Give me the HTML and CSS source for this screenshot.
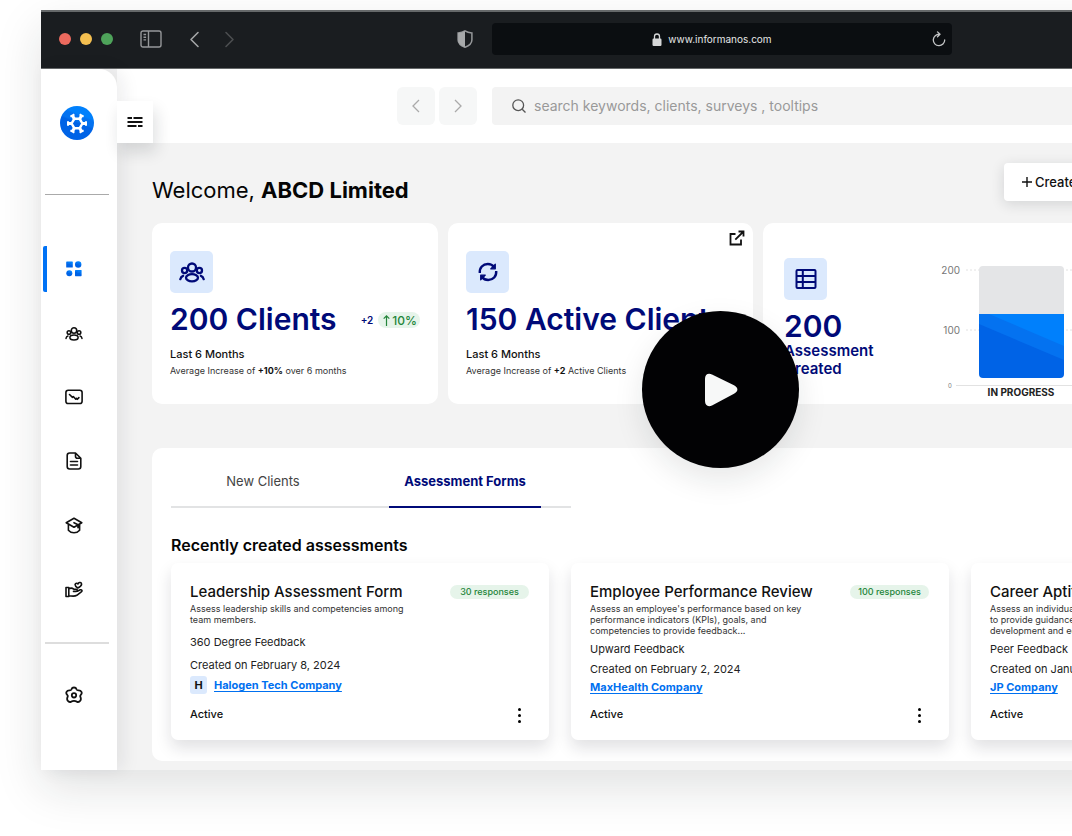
FILE: index.html
```html
<!DOCTYPE html>
<html lang="en">
<head>
<meta charset="utf-8">
<title>Informanos dashboard</title>
<link rel="stylesheet" href="styles.css">
</head>
<body>
<svg class="defs" aria-hidden="true">
  <defs>
    <linearGradient id="blue" x1="0.3" y1="1" x2="0.7" y2="0"><stop offset="0.5" stop-color="#0063e6"/><stop offset="0.55" stop-color="#0472f0"/><stop offset="0.7" stop-color="#0472f0"/><stop offset="0.75" stop-color="#0080fc"/></linearGradient>
    <symbol id="people" viewBox="0 0 26 22">
      <g fill="none" stroke="currentColor" stroke-width="2.3" stroke-linecap="round">
        <circle cx="13" cy="6.500" r="4"/><circle cx="5.600" cy="9.500" r="2.600"/><circle cx="20.400" cy="9.500" r="2.600"/>
        <ellipse cx="13" cy="16.800" rx="6" ry="3.600"/><path d="M1.300 18.200c.4-1.800 1.300-2.900 2.800-3.400M24.700 18.200c-.4-1.800-1.300-2.900-2.800-3.400"/>
      </g>
    </symbol>
  </defs>
</svg>
<div class="window">
  <header class="titlebar">
    <div class="lights"><i class="light red"></i><i class="light yellow"></i><i class="light green"></i></div>
    <div class="browser-tools">
      <svg width="22" height="18" viewBox="0 0 22 18" fill="none" stroke="#96989a" stroke-width="1.4"><rect x="1" y="1" width="20" height="16" rx="2"/><path d="M8.500 1v16M3.500 4.500h2.600M3.500 7.200h2.600M3.500 9.900h2.600"/></svg>
      <svg class="back" width="11" height="17" viewBox="0 0 11 17" fill="none" stroke="#a3a5a6" stroke-width="1.600" stroke-linecap="round" stroke-linejoin="round"><path d="M9 1.500 2 8.500l7 7"/></svg>
      <svg class="forward" width="11" height="17" viewBox="0 0 11 17" fill="none" stroke="#4b4e50" stroke-width="1.600" stroke-linecap="round" stroke-linejoin="round"><path d="m2 1.500 7 7-7 7"/></svg>
    </div>
    <svg class="shield" width="16" height="18" viewBox="0 0 16 18"><path d="M8 .9c2 1.400 4.300 1.900 6.900 2v7c0 3.700-3.400 5.900-6.900 7.300-3.500-1.400-6.900-3.600-6.900-7.300v-7C3.700 2.800 6 2.300 8 .9Z" fill="none" stroke="#96989a" stroke-width="1.500"/><path d="M8 1v16c-3.500-1.400-6.900-3.400-6.900-7.100v-7C3.700 2.800 6 2.400 8 1Z" fill="#a7a9aa"/></svg>
    <div class="address">
      <span class="url"><svg width="10" height="13" viewBox="0 0 10 13"><path d="M2.500 6V3.500a2.500 2.500 0 0 1 5 0V6" fill="none" stroke="#d6d7d8" stroke-width="1.300"/><rect x=".5" y="5.500" width="9" height="7.500" rx="1.200" fill="#d6d7d8"/></svg>www.informanos.com</span>
      <svg width="14" height="16" viewBox="0 0 14 16" fill="none" stroke="#c3c5c6" stroke-width="1.300" stroke-linecap="round" stroke-linejoin="round"><path d="M7.500 3.300A5.700 5.700 0 1 0 12.700 9M5.500.9l2.500 2.400-2.500 2.500"/></svg>
    </div>
  </header>

  <div class="app">
    <aside class="sidebar">
      <div class="brand">
        <svg width="34" height="34" viewBox="0 0 34 34"><circle cx="17" cy="17" r="17" fill="url(#blue)"/><g transform="translate(17 17.500)" fill="none" stroke="#fff"><path d="M5.400 0 2.700 4.700H-2.700L-5.400 0-2.700-4.700H2.700Z" stroke-width="2.400"/><path stroke-width="3" d="M5.500 0H9.500M-5.500 0H-9.500M2.800 4.800 4.700 8.200M-2.800 4.800-4.700 8.200M2.800-4.800 4.700-8.200M-2.800-4.800-4.700-8.200"/><path d="M9-2.300v4.600M-9-2.300v4.600M2.600-9.100l4 2.300M-2.600-9.100l-4 2.300M2.600 9.100l4-2.300M-2.600 9.100l-4-2.300" stroke-width="2"/></g></svg>
      </div>
      <nav class="menu" aria-label="Main">
        <a class="menu-item current" href="#" aria-label="Dashboard"><svg width="18" height="18" viewBox="0 0 18 18" fill="url(#blue)"><rect x="1.200" y="1.500" width="6.600" height="6" rx=".6"/><circle cx="13.200" cy="4.500" r="3.200"/><circle cx="4.300" cy="13.200" r="3"/><rect x="10" y="10" width="6.600" height="6.200" rx=".6"/></svg></a>
        <a class="menu-item" href="#" aria-label="Clients"><svg width="18" height="15"><use href="#people"/></svg></a>
        <a class="menu-item" href="#" aria-label="Reports"><svg width="18" height="16" viewBox="0 0 18 16" fill="none" stroke="currentColor" stroke-width="1.600" stroke-linecap="round" stroke-linejoin="round"><rect x=".9" y="1.300" width="16.200" height="13.200" rx="2.300"/><path d="m4.500 5.500 3 2.800.8-.8 2.500 2.700.7-.8.9.9 1.500-1.700"/></svg></a>
        <a class="menu-item" href="#" aria-label="Forms"><svg width="16" height="18" viewBox="0 0 16 18" fill="none" stroke="currentColor" stroke-width="1.600" stroke-linecap="round" stroke-linejoin="round"><path d="M9.500 1H3.700C2.200 1 1.200 2 1.200 3.500v11c0 1.500 1 2.500 2.500 2.500h8.600c1.500 0 2.500-1 2.500-2.500V6.300L9.500 1v3.300c0 1.300.7 2 2 2h3.300M4.500 9.500h7M4.500 13h7"/></svg></a>
        <a class="menu-item" href="#" aria-label="Training"><svg width="18" height="17" viewBox="0 0 18 17" fill="none" stroke="currentColor" stroke-width="1.600" stroke-linecap="round" stroke-linejoin="round"><path d="M9 1.300 1.200 5.700 9 10.200l7.800-4.500L9 1.300ZM3.400 7.200v6c1.200 1.500 3.100 2.500 5.600 2.500s4.400-1 5.600-2.500v-6M9 5.700l4 2v3"/></svg></a>
        <a class="menu-item" href="#" aria-label="Giving"><svg width="18" height="17" viewBox="0 0 18 17" fill="none" stroke="currentColor" stroke-width="1.600" stroke-linecap="round" stroke-linejoin="round"><path d="M1 6.500h2.800v9H1zM3.800 7.800c2-1.200 3.600-.8 5 .4h2.400c1.500 0 1.500 2.200 0 2.200H8.500M12.300 10.200l3-1.400c1.700-.4 2.200 1.200 1 2l-4.500 3.500c-2.500 1.500-5 .6-8 .4M12.800 7c-2-1.200-3-2.300-2.600-3.800.4-1.300 1.900-1.300 2.800-.3.700-1.500 2.600-1.900 3.300-.7C17.100 4 15 6 12.800 7Z"/></svg></a>
      </nav>
      <a class="menu-item settings" href="#" aria-label="Settings"><svg width="18" height="18" viewBox="0 0 18 18" fill="none" stroke="currentColor" stroke-width="1.800" stroke-linejoin="round"><path d="M6.500 3.200C7.200.9 10.800.9 11.500 3.200c.3.900.9 1.200 1.900 1.200 3-.2 4.300 2.600 2.400 4.400-.7.700-.8 1.200-.4 2 1.400 3.300-.7 5.800-3.400 5-.6-.2-.8-1-3-1s-2.400.8-3 1c-2.700.8-4.800-1.700-3.400-5 .4-.8.300-1.300-.4-2C.3 7 1.600 4.200 4.600 4.400c1 0 1.600-.3 1.900-1.200Z"/><circle cx="9" cy="9.300" r="2.200"/></svg></a>
    </aside>

    <main class="main">
      <div class="topbar">
        <button class="collapse" aria-label="Toggle menu"><svg width="16" height="12" viewBox="0 0 16 12" stroke="#111" stroke-width="2"><path d="M.5 2H5M6.500 2h9M.5 6h15M.5 10h9M11 10h4.500"/></svg></button>
        <div class="history">
          <button class="step" aria-label="Back"><svg width="8" height="14" viewBox="0 0 8 14"><path d="M7 1 1 7l6 6"/></svg></button>
          <button class="step" aria-label="Forward"><svg width="8" height="14" viewBox="0 0 8 14"><path d="m1 1 6 6-6 6"/></svg></button>
        </div>
        <label class="search"><svg width="14" height="14" viewBox="0 0 14 14" fill="none" stroke="#555" stroke-width="1.300"><circle cx="6.200" cy="6.200" r="5.400"/><path d="m10.200 10.200 3.300 3.300"/></svg><input type="text" aria-label="Search" placeholder="search keywords, clients, surveys , tooltips"></label>
      </div>

      <div class="content">
        <div class="welcome">
          <h1>Welcome, <b>ABCD Limited</b></h1>
          <button class="create"><svg width="10" height="10" viewBox="0 0 10 10" stroke="#111" stroke-width="1.400"><path d="M5 0v10M0 5h10"/></svg>Create Assessment</button>
        </div>

        <section class="stats">
          <article class="stat">
            <span class="tile"><svg width="26" height="22"><use href="#people"/></svg></span>
            <div class="figure-row"><p class="figure">200 Clients</p><span class="delta">+2</span><span class="growth"><svg width="7" height="11" viewBox="0 0 7 11" fill="none" stroke="currentColor" stroke-width="1.200"><path d="M3.500 11V1M.7 3.700l2.800-2.800 2.800 2.800"/></svg>10%</span></div>
            <p class="period">Last 6 Months</p>
            <p class="note">Average Increase of <b>+10%</b> over 6 months</p>
          </article>
          <article class="stat">
            <a class="open" href="#" aria-label="Open active clients"><svg width="16" height="16" viewBox="0 0 16 16" fill="none" stroke="#111" stroke-width="1.800"><path d="M6.500 4H1.500v10.500H12V9.500M9.500 1.500h5v5M14.500 1.500 6.300 9.700"/></svg></a>
            <span class="tile"><svg width="20" height="20" viewBox="0 0 20 20" fill="none" stroke="currentColor" stroke-width="2.400" stroke-linejoin="round"><path d="M1.800 11C1.300 5.800 5 2 9.800 2c2.700 0 4.800 1 6.200 3M18.200 9c.5 5.200-3.200 9-8 9-2.700 0-4.800-1-6.200-3"/><path d="M17.300 2.200v4.600h-4.600zM2.700 17.800v-4.600h4.600z" fill="currentColor" stroke-width="1.200"/></svg></span>
            <p class="figure">150 Active Clients</p>
            <p class="period">Last 6 Months</p>
            <p class="note">Average Increase of <b>+2</b> Active Clients</p>
          </article>
          <article class="stat created">
            <div class="created-info">
              <span class="tile"><svg width="22" height="20" viewBox="0 0 22 20" fill="none" stroke="currentColor" stroke-width="2"><rect x="1.500" y="1" width="19" height="18" rx="1"/><path d="M1.500 7h19M1.500 13h19M7.800 1v18"/></svg></span>
              <p class="figure">200</p>
              <p class="caption">Assessment Created</p>
            </div>
            <svg class="chart" width="260" height="146" viewBox="0 0 260 146" role="img" aria-label="Assessments in progress">
              <g stroke="#e2e2e2"><path d="M26 16h234M26 76h234" stroke-dasharray="2 2"/><path d="M16 131.500h244"/></g>
              <g class="axis" text-anchor="end"><text x="20" y="20">200</text><text x="20" y="80">100</text></g>
              <text class="zero" x="8" y="134">0</text>
              <path d="M39 60V16q0-4 4-4h77q4 0 4 4v44Z" fill="#e4e5e7"/>
              <path d="M39 60h85v60q0 4-4 4H43q-4 0-4-4Z" fill="#0063e6"/>
              <path d="M39 60v10l85 36V60Z" fill="#0472f0"/><path d="m49 60 75 32V60Z" fill="#0080fc"/>
              <text class="bar-label" x="81" y="142" text-anchor="middle">IN PROGRESS</text>
            </svg>
          </article>
        </section>

        <section class="panel">
          <div class="tabs" role="tablist">
            <button class="tab" role="tab" aria-selected="false">New Clients</button>
            <button class="tab selected" role="tab" aria-selected="true">Assessment Forms</button>
          </div>
          <h2>Recently created assessments</h2>
          <div class="forms">
            <article class="form-card roomy">
              <div class="form-head"><h3>Leadership Assessment Form</h3><span class="pill">30 responses</span></div>
              <p class="summary">Assess leadership skills and competencies among team members.</p>
              <p class="meta kind">360 Degree Feedback</p>
              <p class="meta date">Created on February 8, 2024</p>
              <p class="company"><span class="initial">H</span><a href="#">Halogen Tech Company</a></p>
              <div class="form-foot"><span>Active</span><button class="more" aria-label="More options"><i></i><i></i><i></i></button></div>
            </article>
            <article class="form-card">
              <div class="form-head"><h3>Employee Performance Review</h3><span class="pill">100 responses</span></div>
              <p class="summary">Assess an employee's performance based on key performance indicators (KPIs), goals, and competencies to provide feedback...</p>
              <p class="meta kind">Upward Feedback</p>
              <p class="meta date">Created on February 2, 2024</p>
              <p class="company"><a href="#">MaxHealth Company</a></p>
              <div class="form-foot"><span>Active</span><button class="more" aria-label="More options"><i></i><i></i><i></i></button></div>
            </article>
            <article class="form-card">
              <div class="form-head"><h3>Career Aptitude Test</h3><span class="pill">80 responses</span></div>
              <p class="summary">Assess an individual's skills and strengths<br>to provide guidance on career choices,<br>development and education...</p>
              <p class="meta kind">Peer Feedback</p>
              <p class="meta date">Created on January 30, 2024</p>
              <p class="company"><a href="#">JP Company</a></p>
              <div class="form-foot"><span>Active</span><button class="more" aria-label="More options"><i></i><i></i><i></i></button></div>
            </article>
          </div>
        </section>
      </div>
    </main>
  </div>
  <button class="play" aria-label="Play video"><svg width="34" height="34" viewBox="0 0 34 34"><path d="M1 6C1 1.500 4-.2 8 1.500l22 10.800c4.500 2.200 4.500 6.200 0 8.400L8 32.500C4 34.200 1 32.500 1 28Z" fill="#f7f8f8"/></svg></button>
</div>
</body>
</html>
```
FILE: styles.css
```css
* { box-sizing: border-box; }
body {
  margin: 0;
  padding: 10px 0 66px 41px;
  overflow: hidden;
  background: #fff;
  color: #111;
  font-family: Inter, "Liberation Sans", sans-serif;
  font-size: 11px;
}
h1, h2, h3, p { margin: 0; }
button { border: 0; padding: 0; background: none; font: inherit; color: inherit; cursor: pointer; }
svg { display: block; flex: none; }
.defs { position: absolute; width: 0; height: 0; }

.window {
  position: relative;
  margin-right: -150px;
  box-shadow: 0 18px 44px rgba(20, 30, 30, 0.13);
}

.titlebar {
  display: flex;
  align-items: center;
  height: 59px;
  padding: 0 0 2px 18px;
  background: #1a1d20;
  border-top: 2px solid #66696a;
  border-bottom: 1px solid #66696a;
}
.lights { display: flex; gap: 9px; width: 81px; }
.light { width: 12px; height: 12px; border-radius: 50%; }
.red { background: #ec6a5e; }
.yellow { background: #f4bf50; }
.green { background: #4ea35a; }
.browser-tools { display: flex; align-items: center; width: 317px; }
.back { margin-left: 27px; }
.forward { margin-left: 24px; }
.shield { margin-right: 19px; }
.address {
  display: flex;
  align-items: center;
  width: 460px;
  height: 32px;
  padding-right: 6px;
  border-radius: 4px;
  background: #0b0e11;
  color: #e6e7e7;
  font-size: 10px;
}
.url { flex: 1; display: flex; justify-content: center; align-items: center; gap: 6px; }

.app { display: flex; background: #f3f3f3; }
.sidebar {
  position: relative;
  z-index: 1;
  flex: none;
  width: 76px;
  padding: 0 8px 0 4px;
  background: #fff;
  border-top-right-radius: 18px;
  box-shadow: 6px 0 18px rgba(20, 25, 35, 0.08);
}
.brand { height: 126px; padding: 37px 0 0 15px; border-bottom: 1px solid #aaa; }
.menu { height: 449px; padding-top: 51px; border-bottom: 2px solid #ddd; }
.menu-item { display: flex; align-items: center; justify-content: center; height: 46px; margin-bottom: 18px; padding-right: 6px; color: #111; }
.current { margin-left: -2px; padding-right: 8px; border-left: 4px solid #0072f5; border-radius: 2px; }
.settings { margin-top: 28px; }

.main { flex: 1; min-width: 0; }
.topbar { display: flex; align-items: flex-start; height: 74px; padding-top: 18px; background: #fff; }
.collapse {
  position: relative;
  z-index: 1;
  align-self: flex-end;
  display: flex;
  align-items: center;
  justify-content: center;
  width: 36px;
  height: 42px;
  background: #fff;
  box-shadow: 3px 9px 16px rgba(20, 25, 35, 0.14);
}
.history { display: flex; gap: 4px; margin: 0 15px 0 244px; }
.step { display: flex; align-items: center; justify-content: center; width: 38px; height: 38px; border-radius: 6px; background: #f6f7f7; }
.step svg { fill: none; stroke: #aaa; stroke-width: 1.3; }
.search { flex: 1; display: flex; align-items: center; gap: 8px; height: 38px; padding-left: 20px; background: #f3f3f3; border-radius: 4px 0 0 4px; }
.search input { flex: 1; height: 20px; border: 0; padding: 0 0 2px; outline: 0; background: none; font: 14px Inter, "Liberation Sans", sans-serif; }
.search input::placeholder { color: #999; opacity: 1; }

.content { padding: 20px 35px 9px; }
.welcome { display: flex; justify-content: space-between; align-items: center; height: 38px; margin-bottom: 22px; }
h1 { padding-top: 16px; font-size: 22px; line-height: 24px; font-weight: 400; color: #050505; }
h1 b { font-weight: 700; }
.create {
  display: flex;
  align-items: center;
  gap: 3px;
  width: 183px;
  height: 38px;
  padding-left: 18px;
  border-radius: 4px;
  background: #fff;
  box-shadow: 0 3px 14px rgba(20, 25, 35, 0.14);
  font-size: 13px;
  font-weight: 500;
}

.stats { display: flex; gap: 10px; margin-bottom: 44px; }
.stat { position: relative; flex: none; width: 286px; min-height: 181px; padding: 28px 18px 0; border-radius: 10px; background: #fff; }
.stat:nth-child(2) { width: 305px; }
.tile { display: flex; align-items: center; justify-content: center; width: 43px; height: 42px; border-radius: 5px; background: #dbe9fd; color: #000a78; }
.figure { margin-top: 6px; font-size: 30px; line-height: 40px; font-weight: 600; color: #000a78; white-space: nowrap; }
.figure-row { display: flex; align-items: flex-end; }
.delta { margin: 0 5px 12px auto; font-size: 10px; line-height: 14px; font-weight: 600; color: #000a78; }
.growth { display: flex; align-items: center; gap: 2px; height: 16px; margin-bottom: 11px; padding: 0 3px 0 5px; border-radius: 8px; background: #e6f4ea; color: #24853a; font-size: 12px; font-weight: 500; }
.period { margin-top: 7px; line-height: 16px; font-weight: 500; }
.note { line-height: 18px; font-size: 9px; color: #333; }
.note b { color: #111; }
.open { position: absolute; top: 7px; right: 8px; }
.stat.created { flex: 1; display: flex; padding: 31px 0 0 21px; }
.created-info { flex: none; width: 156px; padding-top: 4px; }
.created .figure { margin-top: 10px; line-height: 32px; }
.caption { width: 100px; font-size: 15px; line-height: 18px; font-weight: 600; color: #000a78; }
.axis { font-size: 10px; fill: #777; }
.zero { font-size: 6px; fill: #777; }
.bar-label { font-size: 10px; font-weight: 700; fill: #222; }

.panel { padding: 0 19px 21px; border-radius: 10px; background: #fff; overflow: hidden; }
.tabs { display: flex; gap: 34px; width: 400px; height: 60px; border-bottom: 2px solid #e2e3e4; }
.tab { width: 184px; height: 60px; padding-top: 8px; font-size: 13px; color: #444; border-bottom: 2px solid transparent; }
.tab.selected { width: 152px; font-weight: 700; color: #000a78; border-bottom-color: #000a78; }
h2 { margin: 27px 0 8px; font-size: 16px; line-height: 20px; font-weight: 600; color: #050505; }
.forms { display: flex; gap: 22px; }
.form-card {
  flex: none;
  display: flex;
  flex-direction: column;
  width: 378px;
  height: 177px;
  padding: 19px 20px 16px 19px;
  border-radius: 7px;
  background: #fff;
  box-shadow: 0 8px 16px rgba(20, 25, 35, 0.13);
}
.form-head { display: flex; justify-content: space-between; align-items: center; height: 20px; }
h3 { font-size: 15px; line-height: 20px; font-weight: 500; }
.pill { width: 79px; border-radius: 7px; background: #e6f4ea; color: #24853a; font-size: 9px; line-height: 14px; font-weight: 500; text-align: center; }
.summary { width: 230px; margin-top: 1px; font-size: 9px; line-height: 11px; color: #333; }
.meta { line-height: 16px; color: #222; }
.kind { margin-top: 5px; }
.date { margin-top: 4px; }
.roomy .kind { margin-top: 9px; }
.roomy .date { margin-top: 7px; }
.company { display: flex; align-items: center; gap: 7px; height: 20px; font-weight: 700; }
.roomy .company { margin-top: 2px; }
.company a { color: #0070f0; text-underline-offset: 2px; }
.initial { width: 17px; border-radius: 3px; background: #dbe9fd; line-height: 18px; text-align: center; }
.form-foot { display: flex; justify-content: space-between; align-items: center; margin-top: auto; line-height: 20px; font-weight: 500; }
.more { display: flex; flex-direction: column; gap: 3px; padding: 3px 8px 0; }
.more i { width: 3px; height: 3px; border-radius: 50%; background: #000; }

.play {
  position: absolute;
  z-index: 2;
  left: 601px;
  top: 301px;
  display: flex;
  align-items: center;
  justify-content: center;
  width: 157px;
  height: 157px;
  border-radius: 50%;
  background: #020204;
  box-shadow: 0 12px 30px rgba(20, 30, 30, 0.1);
}
```
